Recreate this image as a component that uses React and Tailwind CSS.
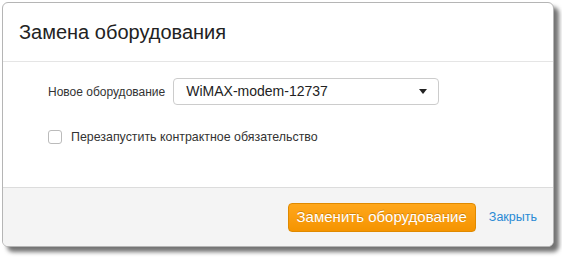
function App() {
  return (
    <div className="h-[258px] w-[562px] bg-white pl-[2px] pt-[2px] font-['Liberation_Sans',Arial,sans-serif]">
      <div className="flex h-[245px] w-[552px] flex-col overflow-hidden rounded-[6px] border border-[#b5b5b5] bg-white shadow-[5px_5px_4px_rgba(0,0,0,0.55)]">
        <div className="flex h-[59px] items-center border-b border-[#e5e5e5] px-4">
          <h1 className="text-[20px] text-[#222]">Замена оборудования</h1>
        </div>

        <div className="flex flex-1 flex-col gap-[23px] pl-[45px] pt-[16px]">
          <div className="flex items-center gap-[8px]">
            <label className="text-[12px] text-[#333]">Новое оборудование</label>
            <div className="flex h-[27px] w-[266px] items-center justify-between rounded-[4px] border border-[#ccc] bg-white pl-[12px] pr-[11px]">
              <span className="text-[14px] text-[#222]">WiMAX-modem-12737</span>
              <span className="h-0 w-0 border-x-[4px] border-t-[5px] border-x-transparent border-t-[#222]" />
            </div>
          </div>

          <label className="flex items-center gap-[9px]">
            <span className="h-[14px] w-[14px] rounded-[3px] border border-[#bbb] bg-white" />
            <span className="text-[12.4px] text-[#333]">Перезапустить контрактное обязательство</span>
          </label>
        </div>

        <div className="flex h-[59px] items-center justify-end gap-[13px] border-t border-[#dcdcdc] bg-[#f4f4f4] pr-[16px]">
          <button className="h-[29px] rounded-[4px] border border-[#e08a00] bg-gradient-to-b from-[#ffa71a] to-[#f59400] px-[8px] text-[15px] text-white [text-shadow:0_-1px_0_rgba(0,0,0,0.2)]">
            Заменить оборудование
          </button>
          <a className="text-[12.5px] text-[#2a8ad4]">Закрыть</a>
        </div>
      </div>
    </div>
  );
}

export default App;
